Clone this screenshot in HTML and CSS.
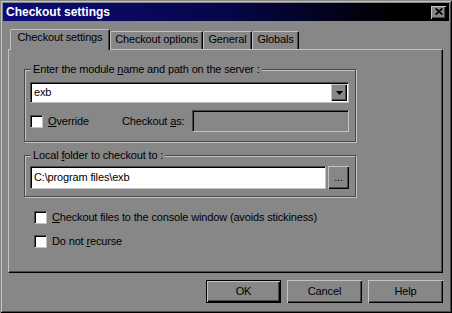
FILE: index.html
```html
<!DOCTYPE html>
<html>
<head>
<meta charset="utf-8">
<title>Checkout settings</title>
<link rel="stylesheet" href="styles.css">
</head>
<body>
<div class="window">
  <div class="titlebar">
    <span class="title">Checkout settings</span>
    <span class="close raised"><svg width="8" height="7" viewBox="0 0 8 7"><path d="M0.6 0.4 L7.4 6.6 M7.4 0.4 L0.6 6.6" stroke="#000" stroke-width="1.7" fill="none"/></svg></span>
  </div>
  <div class="client">
    <div class="tabs">
      <div class="tab active t1">Checkout settings</div>
      <div class="tab t2">Checkout options</div>
      <div class="tab t3">General</div>
      <div class="tab t4">Globals</div>
    </div>
    <div class="panel">
      <fieldset class="group g1">
        <legend>Enter the module <u>n</u>ame and path on the server :</legend>
        <div class="combo">
          <span class="combo-text">exb</span>
          <span class="combo-btn raised"><svg width="7" height="4" viewBox="0 0 7 4"><polygon points="0,0 7,0 3.5,4" fill="#000"/></svg></span>
        </div>
        <div class="row2">
          <span class="check"></span>
          <span class="lbl override"><u>O</u>verride</span>
          <span class="lbl">Checkout <u>a</u>s:</span>
          <span class="field disabled"></span>
        </div>
      </fieldset>
      <fieldset class="group g2">
        <legend>Local <u>f</u>older to checkout to :</legend>
        <div class="pathrow">
          <span class="field path">C:\program files\exb</span>
          <span class="browse raised">...</span>
        </div>
      </fieldset>
      <div class="opt first">
        <span class="check"></span>
        <span class="lbl"><u>C</u>heckout files to the console window (avoids stickiness)</span>
      </div>
      <div class="opt second">
        <span class="check"></span>
        <span class="lbl">Do not <u>r</u>ecurse</span>
      </div>
    </div>
    <div class="buttons">
      <span class="btn default">OK</span>
      <span class="btn">Cancel</span>
      <span class="btn">Help</span>
    </div>
  </div>
</div>
</body>
</html>
```
FILE: styles.css
```css
* { box-sizing: border-box; }
body {
  margin: 0;
  background: #878787;
  font-family: "Liberation Sans", Arial, sans-serif;
  font-size: 11px;
  line-height: 13px;
  letter-spacing: -0.15px;
  color: #000;
}
u { text-decoration: underline; text-underline-offset: 1px; }
.window {
  width: 452px;
  height: 313px;
  padding: 3px;
  background: #878787;
  box-shadow: inset 1px 1px #878787, inset -1px -1px #000, inset 2px 2px #c3c3c3, inset -2px -2px #4a4a4a;
  display: flex;
  flex-direction: column;
}
.titlebar {
  height: 18px;
  flex: none;
  display: flex;
  align-items: center;
  justify-content: space-between;
  padding: 0 3px;
  background: linear-gradient(90deg, #0c0c7a 0%, #06064a 50%, #000 88%);
  color: #fff;
  font-weight: bold;
  font-size: 12px;
  line-height: 14px;
  letter-spacing: 0;
}
.raised {
  background: #878787;
  box-shadow: inset 1px 1px #c3c3c3, inset -1px -1px #000, inset -2px -2px #4a4a4a;
}
.close {
  width: 15px;
  height: 13px;
  display: flex;
  align-items: center;
  justify-content: center;
}
.close svg { display: block; margin-top: -1px; }
.client {
  flex: 1;
  padding: 8px 6px 0 5px;
}
.tabs {
  display: flex;
  height: 21px;
  margin-bottom: -1px;
  padding-left: 2px;
  position: relative;
  z-index: 1;
}
.tab {
  height: 18px;
  margin-top: 2px;
  border-top: 1px solid #c3c3c3;
  border-left: 1px solid #c3c3c3;
  border-right: 1px solid #000;
  box-shadow: inset -1px 0 #4a4a4a;
  border-radius: 2px 2px 0 0;
  padding-top: 1px;
  text-align: center;
  white-space: nowrap;
  background: #878787;
}
.tab.active { height: 21px; margin-top: 0; }
.t1 { width: 100px; }
.t2 { width: 93px; }
.t3 { width: 49px; }
.t4 { width: 47px; }
.panel {
  height: 224px;
  border-top: 1px solid #c3c3c3;
  border-left: 1px solid #c3c3c3;
  border-right: 1px solid #000;
  border-bottom: 1px solid #000;
  box-shadow: inset -1px -1px #4a4a4a;
  padding: 13px 0 0 15px;
}
.group {
  width: 332px;
  min-width: 0;
  margin: 0;
  border: 1px solid #4a4a4a;
  box-shadow: 1px 1px #c3c3c3, inset 1px 1px #c3c3c3;
}
.group legend {
  padding: 0 2px;
  margin-left: 1px;
  background: #878787;
  line-height: 13px;
}
.g1 { padding: 6px 6px 9px 5px; }
.g2 { padding: 4px 6px 7px 5px; margin-top: 7px; }
.combo {
  width: 319px;
  height: 21px;
  display: flex;
  background: #fff;
  border: 1px solid;
  border-color: #4a4a4a #c3c3c3 #c3c3c3 #4a4a4a;
  box-shadow: inset 1px 1px #000;
  padding: 1px;
}
.combo-text { flex: 1; padding-left: 2px; line-height: 17px; }
.combo-btn {
  width: 16px;
  height: 17px;
  display: flex;
  align-items: center;
  justify-content: center;
}
.row2 {
  display: flex;
  align-items: center;
  height: 22px;
  margin-top: 7px;
}
.check {
  width: 13px;
  height: 13px;
  flex: none;
  background: #fff;
  border: 1px solid;
  border-color: #4a4a4a #c3c3c3 #c3c3c3 #4a4a4a;
  box-shadow: inset 1px 1px #000;
}
.lbl { margin-left: 5px; white-space: nowrap; }
.override { width: 74px; }
.row2 .lbl + .lbl { margin-left: 0; }
.field {
  display: block;
  border: 1px solid;
  border-color: #4a4a4a #c3c3c3 #c3c3c3 #4a4a4a;
  box-shadow: inset 1px 1px #000;
  background: #fff;
}
.field.disabled {
  width: 157px;
  height: 22px;
  margin-left: auto;
  background: #878787;
}
.pathrow { display: flex; gap: 2px; }
.field.path {
  width: 296px;
  height: 23px;
  padding: 1px 0 0 3px;
  line-height: 19px;
  white-space: nowrap;
}
.browse {
  width: 21px;
  height: 23px;
  display: flex;
  align-items: center;
  justify-content: center;
  line-height: 13px;
  padding-bottom: 1px;
}
.opt {
  display: flex;
  align-items: center;
  height: 13px;
  margin-left: 10px;
}
.opt.first { margin-top: 14px; }
.opt.second { margin-top: 11px; }
.buttons {
  display: flex;
  justify-content: flex-end;
  gap: 6px;
  margin-top: 7px;
}
.btn {
  width: 75px;
  height: 23px;
  display: flex;
  align-items: center;
  justify-content: center;
  background: #878787;
  box-shadow: inset 1px 1px #c3c3c3, inset -1px -1px #000, inset -2px -2px #4a4a4a;
}
.btn.default {
  border: 1px solid #000;
}
```
